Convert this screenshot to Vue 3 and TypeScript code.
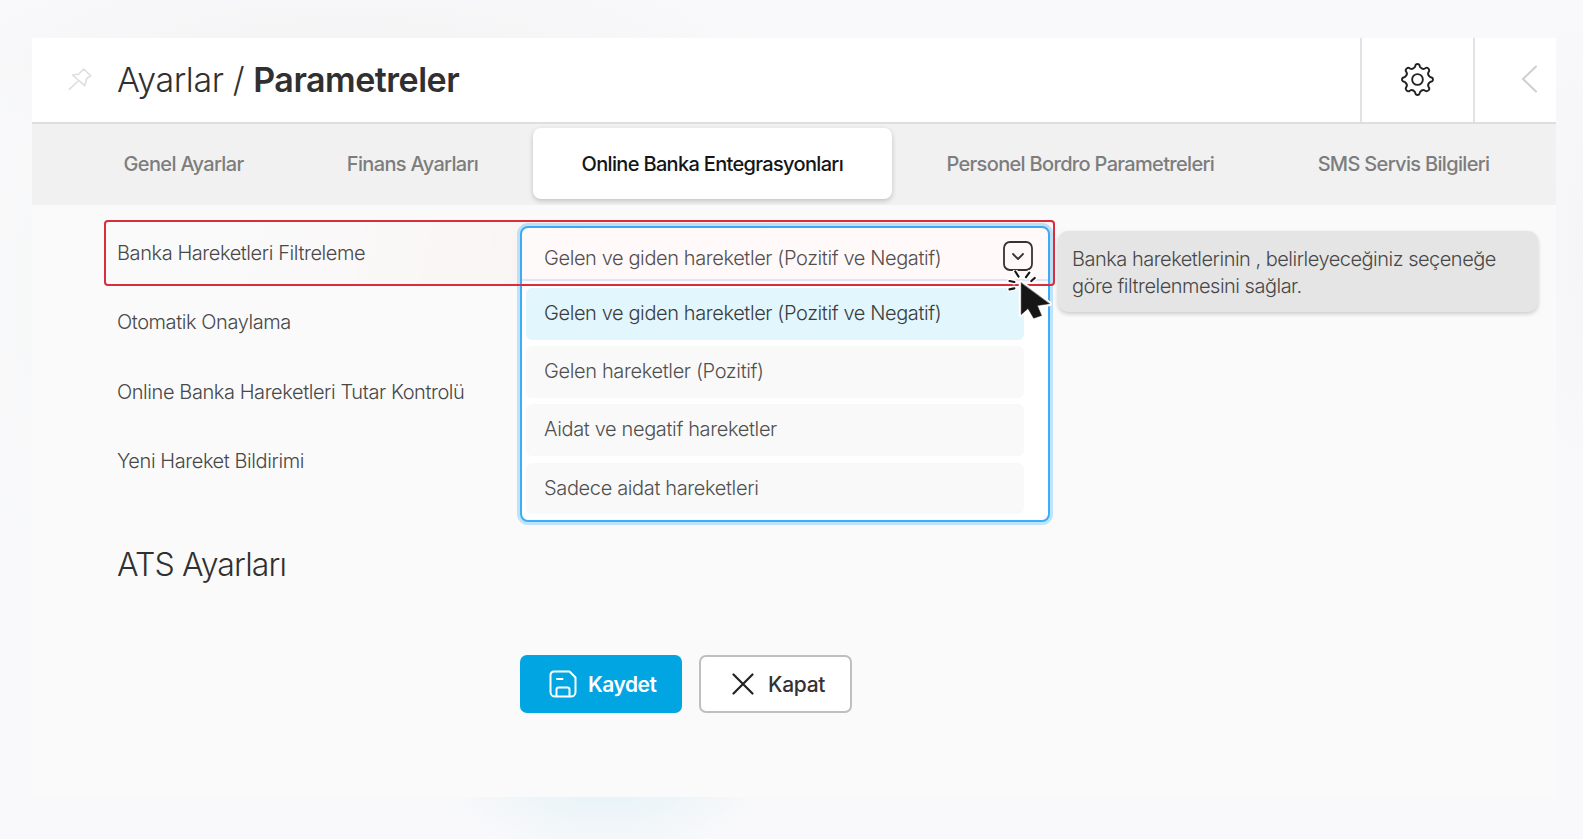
<script setup lang="ts">
import { ref } from 'vue';

const tabs: string[] = [
	'Genel Ayarlar',
	'Finans Ayarları',
	'Online Banka Entegrasyonları',
	'Personel Bordro Parametreleri',
	'SMS Servis Bilgileri'
];
const labels: string[] = [
	'Banka Hareketleri Filtreleme',
	'Otomatik Onaylama',
	'Online Banka Hareketleri Tutar Kontrolü',
	'Yeni Hareket Bildirimi'
];
const options: string[] = [
	'Gelen ve giden hareketler (Pozitif ve Negatif)',
	'Gelen hareketler (Pozitif)',
	'Aidat ve negatif hareketler',
	'Sadece aidat hareketleri'
];

const activeTab = ref<number>(2);
const selected = ref<number>(0);
</script>

<template>
	<div class="page">
		<div class="panel">
			<header class="header">
				<svg class="pin" viewBox="0 0 24 24" width="24" height="24">
					<path d="M1.300 21.300 9.500 13.500M15.700 1l7 6.800-4 2.700-2 7.200L4.500 7l6-.8z" />
				</svg>
				<h1 class="title">Ayarlar / <b>Parametreler</b></h1>
				<button class="gear">
					<svg viewBox="-16 -16 32 32" width="33" height="33">
						<path d="M-2.4-12.2C-2-13-2.400-15 0-15S2-13 2.400-12.200Q4.800-9.200 7.200-10.700C8-11.300 9-12.400 10.600-10.600S11.300-8 10.700-7.200Q9.200-4.800 12.200-2.400C13-2 15-2.400 15 0S13 2 12.200 2.400Q9.200 4.800 10.700 7.200C11.300 8 12.400 9 10.600 10.600S8 11.300 7.200 10.700Q4.800 9.200 2.400 12.200C2 13 2.400 15 0 15S-2 13-2.400 12.200Q-4.800 9.200-7.200 10.700C-8 11.300-9 12.400-10.600 10.600S-11.300 8-10.700 7.200Q-9.200 4.800-12.200 2.400C-13 2-15 2.400-15 0S-13-2-12.200-2.400Q-9.200-4.800-10.700-7.200C-11.300-8-12.400-9-10.600-10.600S-8-11.300-7.200-10.700Q-4.800-9.200-2.400-12.200z" />
						<circle r="5.200" />
					</svg>
				</button>
				<button class="back">
					<svg viewBox="0 0 16 28" width="16" height="28">
						<path d="M15 1.500 2 14l13 12.500" />
					</svg>
				</button>
			</header>

			<nav class="tabs">
				<div v-for="tab, idx in tabs" :key="tab" class="tab" :class="{ active: activeTab === idx }" @click="activeTab = idx">{{ tab }}</div>
			</nav>

			<main class="content">
				<div class="settings">
					<div class="labels">
						<div v-for="label in labels" :key="label" class="label">{{ label }}</div>
					</div>

					<div class="select">
						<div class="select_value">
							<span>{{ options[selected] }}</span>
							<svg class="select_arrow" viewBox="0 0 30 30" width="30" height="30">
								<rect x="1" y="1" width="28" height="28" rx="6" />
								<path d="m10 13 5 5 5-5" />
							</svg>
						</div>
						<div class="select_options">
							<div v-for="option, idx in options" :key="option" class="option" :class="{ selected: selected === idx }" @click="selected = idx">{{ option }}</div>
						</div>
					</div>

					<div class="hint">Banka hareketlerinin , belirleyeceğiniz seçeneğe göre filtrelenmesini sağlar.</div>

					<!-- Highlight frame and pointer lie over the first row -->
					<div class="frame"></div>
					<svg class="pointer" viewBox="0 0 46 54" width="46" height="54">
						<g class="halo">
							<path d="M14.200 13v31.500l6.800-6 5.700 9.700 7.800-2.700-4.200-10 12-1.800z" />
							<path d="m8.300 1.500 3.200 5M22.300 2.700l-3.300 4.500M27.700 8l-3.400 3M2.500 11l4.800 1M2.500 19.300l4.800-1" />
						</g>
						<path class="arrow" d="M14.200 13v31.500l6.800-6 5.700 9.700 7.800-2.700-4.200-10 12-1.800z" />
						<path class="rays" d="m8.300 1.500 3.200 5M22.300 2.700l-3.300 4.500M27.700 8l-3.400 3M2.500 11l4.800 1M2.500 19.300l4.800-1" />
					</svg>
				</div>

				<h2 class="subtitle">ATS Ayarları</h2>

				<div class="actions">
					<button class="btn save">
						<svg viewBox="0 0 28 28" width="28" height="28">
							<path d="M5 1.500h15.500l6 6V22a4.500 4.500 0 0 1-4.500 4.500H6A4.500 4.500 0 0 1 1.500 22V5A3.500 3.500 0 0 1 5 1.500zM7.500 26v-6.500a2 2 0 0 1 2-2h9a2 2 0 0 1 2 2V26M8 9h5.500" />
						</svg>
						Kaydet
					</button>
					<button class="btn close">
						<svg viewBox="0 0 22 22" width="22" height="22">
							<path d="m1.500 1.500 19 19M20.500 1.500l-19 19" />
						</svg>
						Kapat
					</button>
				</div>
			</main>
		</div>
	</div>
</template>

<style>
body {
	background-color: #f9f9fb;
}
</style>

<style scoped>
.page {
	box-sizing: border-box;
	height: 839px;
	padding: 38px 27px 42px 32px;
	font-family: Inter, "Liberation Sans", sans-serif;
	background:
		radial-gradient(ellipse 170px 90px at 605px 770px, #e2f1f7, #e2f1f700),
		radial-gradient(ellipse 420px 110px at 350px 60px, #f3f3f4, #f3f3f400),
		radial-gradient(ellipse 70px 260px at 1583px 240px, #f5f5f7, #f5f5f700),
		radial-gradient(ellipse 60px 260px at 32px 300px, #f7f8f8, #f7f8f800),
		#f9f9fb;
}

.panel {
	display: flex;
	flex-direction: column;
	height: 759px;
	background-color: #fafafa;
}

svg {
	display: block;
	fill: none;
	stroke-linecap: round;
	stroke-linejoin: round;
}

button {
	padding: 0;
	border: 0;
	background: none;
	font-family: inherit;
}

.header {
	display: flex;
	align-items: stretch;
	box-sizing: border-box;
	height: 86px;
	border-bottom: 2px solid #dedede;
	background-color: #ffffff;
}

.pin {
	align-self: center;
	margin: 0 25px 0 36px;
	stroke: #dedede;
	stroke-width: 1.6;
}

.title {
	flex: 1;
	margin: 0;
	color: #303030;
	font-size: 34px;
	font-weight: 300;
	letter-spacing: -0.4px;
	line-height: 83px;
}

.title b {
	font-weight: 560;
	letter-spacing: -0.5px;
}

.gear {
	display: flex;
	align-items: center;
	justify-content: center;
	width: 113px;
	border-left: 2px solid #e2e2e2;
}

.gear svg {
	margin-top: -2px;
	stroke: #222222;
	stroke-width: 1.8;
}

.back {
	display: flex;
	align-items: center;
	box-sizing: border-box;
	width: 83px;
	padding-left: 46px;
	border-left: 2px solid #e2e2e2;
}

.back svg {
	margin-top: -3px;
	stroke: #cfcfcf;
	stroke-width: 2;
}

.tabs {
	display: flex;
	align-items: center;
	gap: 5.4px;
	box-sizing: border-box;
	height: 81px;
	padding: 0 0 2px 42.6px;
	background-color: #f1f1f1;
}

.tab {
	padding: 1px 49px 0;
	border-radius: 8px;
	color: #7d7d7d;
	font-size: 20px;
	font-weight: 500;
	letter-spacing: -0.67px;
	line-height: 70px;
	white-space: nowrap;
}

.tab.active {
	background-color: #ffffff;
	color: #151515;
	box-shadow: 0 2px 5px #00000033;
}

.content {
	padding-left: 85px;
}

.settings {
	display: flex;
	position: relative;
	align-items: flex-start;
	padding-top: 21px;
}

.labels {
	width: 403px;
}

.label {
	height: 69.3px;
	color: #484848;
	font-size: 20px;
	font-weight: 350;
	letter-spacing: -0.42px;
	line-height: 55.6px;
	white-space: nowrap;
}

.select {
	box-sizing: border-box;
	width: 530px;
	height: 296px;
	border: 2px solid #3aaefa;
	border-radius: 8px;
	background-color: #ffffff;
	box-shadow: 0 0 0 3px #bfe3fa;
	color: #505050;
	font-size: 20px;
	font-weight: 350;
	letter-spacing: -0.4px;
	white-space: nowrap;
}

.select_value {
	display: flex;
	justify-content: space-between;
	box-sizing: border-box;
	height: 53px;
	padding: 0 15px 0 22px;
	border-bottom: 2px solid #dcebfa;
	line-height: 60px;
}

.select_arrow {
	margin-top: 13px;
	stroke: #333333;
	stroke-width: 1.8;
}

.select_options {
	display: flex;
	flex-direction: column;
	gap: 6.600px;
	padding: 7px 24px 0 4px;
}

.option {
	height: 51.600px;
	padding-left: 18px;
	border-radius: 6px;
	background-color: #f9f9f9;
	letter-spacing: -0.36px;
	line-height: 51.6px;
}

.option.selected {
	background-color: #e2f6fd;
	color: #3c3c3c;
	letter-spacing: -0.4px;
}

.hint {
	box-sizing: border-box;
	width: 480px;
	height: 81px;
	margin: 5px 0 0 8px;
	padding: 15px 13px 0 14px;
	border-radius: 10px;
	background-color: #e5e5e5;
	box-shadow: 0 2px 4px #00000030;
	color: #484848;
	font-size: 20px;
	font-weight: 350;
	letter-spacing: -0.5px;
	line-height: 27px;
}

.frame {
	position: absolute;
	top: 15px;
	left: -13px;
	box-sizing: border-box;
	width: 951px;
	height: 66px;
	border: 2px solid #d92c3c;
	border-radius: 4px;
	background: linear-gradient(100deg, #ff000000 10%, #ff000006 50%);
}

.pointer {
	position: absolute;
	top: 65px;
	left: 890px;
}

.halo path {
	stroke: #ffffff;
	stroke-width: 5;
}

.arrow {
	fill: #161616;
	stroke: #161616;
	stroke-width: 0.5;
}

.rays {
	stroke: #161616;
	stroke-width: 2.2;
}

.subtitle {
	margin: 23px 0 0;
	color: #303030;
	font-size: 32px;
	font-weight: 320;
	letter-spacing: -0.82px;
	line-height: 40px;
}

.actions {
	display: flex;
	align-items: flex-start;
	gap: 17px;
	padding: 70px 0 0 403px;
}

.btn {
	display: flex;
	align-items: center;
	box-sizing: border-box;
	height: 58px;
	border-radius: 7px;
	font-size: 21px;
}

.save {
	gap: 11px;
	width: 162px;
	padding-left: 29px;
	background-color: #00a5e2;
	color: #ffffff;
	font-weight: 600;
	letter-spacing: -0.5px;
	stroke: #ffffff;
	stroke-width: 2;
}

.close {
	gap: 14px;
	width: 153px;
	padding-left: 31px;
	border: 2px solid #bfbfbf;
	background-color: #ffffff;
	color: #333333;
	font-weight: 500;
	letter-spacing: -0.3px;
	stroke: #222222;
	stroke-width: 2.200;
}
</style>
